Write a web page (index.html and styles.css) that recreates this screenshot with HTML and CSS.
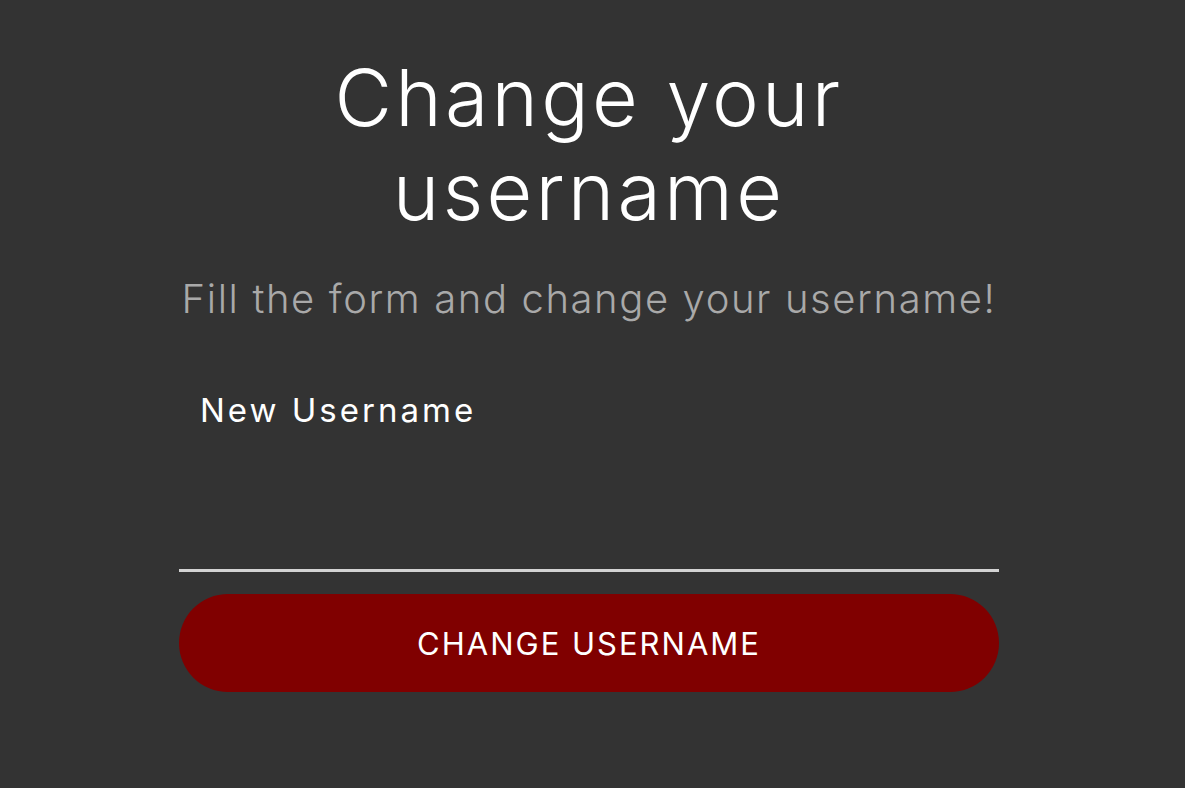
FILE: index.html
```html
<!DOCTYPE html>
<html lang="en">
<head>
<meta charset="utf-8">
<title>Change your username</title>
<link rel="stylesheet" href="styles.css">
</head>
<body>
<main class="page">
  <h1 class="title">Change your<br>username</h1>
  <p class="subtitle">Fill the form and change your username!</p>
  <form class="form">
    <div class="field">
      <label class="field-label" for="username">New Username</label>
      <input class="field-input" id="username" type="text">
    </div>
    <button class="submit" type="button">CHANGE USERNAME</button>
  </form>
</main>
</body>
</html>
```
FILE: styles.css
```css
html, body {
  margin: 0;
  padding: 0;
  background: #333333;
  height: 100%;
}
body {
  font-family: "Inter", "Open Sans", sans-serif;
  color: #ffffff;
}
.page {
  width: 820px;
  margin: 0 auto;
  padding: 50px 7px 0 0;
  display: flex;
  flex-direction: column;
}
.title {
  margin: 0;
  text-align: center;
  font-size: 79px;
  line-height: 94px;
  font-weight: 300;
  letter-spacing: 3.2px;
}
.subtitle {
  margin: 38px 0 0;
  text-align: center;
  font-size: 40px;
  line-height: 46px;
  font-weight: 300;
  letter-spacing: 1.6px;
  color: #a9a9a9;
}
.form {
  margin-top: 68px;
  display: flex;
  flex-direction: column;
}
.field {
  display: flex;
  flex-direction: column;
}
.field-label {
  padding-left: 21px;
  font-size: 33px;
  line-height: 40px;
  font-weight: 400;
  letter-spacing: 3px;
}
.field-input {
  margin: 0;
  height: 142px;
  border: none;
  border-bottom: 3px solid #d3d3d3;
  background: transparent;
  box-sizing: border-box;
  color: #fff;
  outline: none;
}
.submit {
  margin-top: 22px;
  height: 98px;
  border: none;
  border-radius: 49px;
  background: #800000;
  color: #ffffff;
  font-family: inherit;
  font-size: 31px;
  font-weight: 400;
  letter-spacing: 2px;
}
```
